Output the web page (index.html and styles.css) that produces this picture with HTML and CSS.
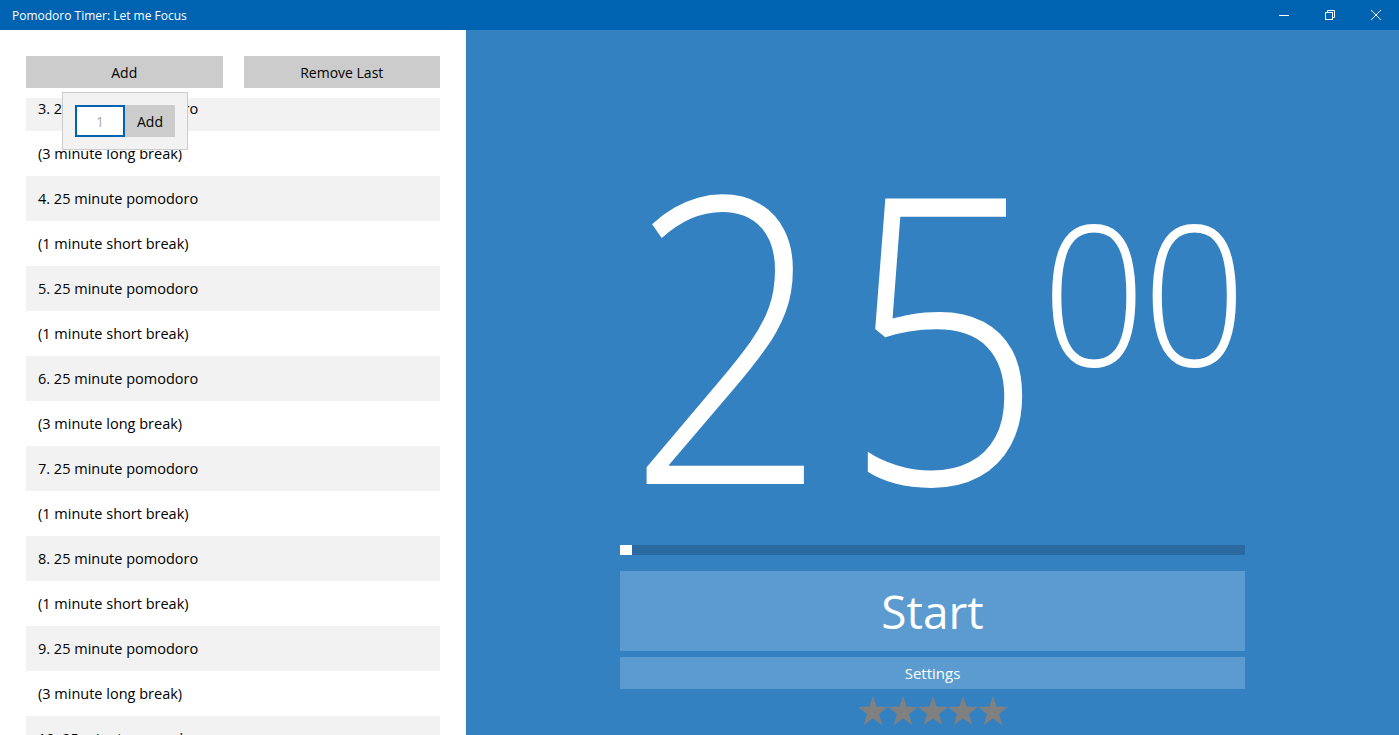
FILE: index.html
```html
<!DOCTYPE html>
<html lang="en">
<head>
    <meta charset="UTF-8">
    <meta name="viewport" content="width=device-width, initial-scale=1.0">
    <title>Pomodoro Timer: Let me Focus</title>
    <link rel="stylesheet" href="styles.css">
</head>
<body>
    <div class="titlebar">
        <span class="title">Pomodoro Timer: Let me Focus</span>
        <div class="window-btns">
            <span class="win-btn">
                <svg width="10" height="10" viewBox="0 0 10 10"><path d="M0 5.5h10" stroke="#fff" stroke-width="1"/></svg>
            </span>
            <span class="win-btn">
                <svg width="10" height="10" viewBox="0 0 10 10" fill="none" stroke="#fff" stroke-width="1"><rect x="0.5" y="2.5" width="7" height="7"/><path d="M2.5 2.5V0.5h7v7h-2"/></svg>
            </span>
            <span class="win-btn">
                <svg width="10" height="10" viewBox="0 0 10 10"><path d="M0 0L10 10M10 0L0 10" stroke="#fff" stroke-width="1"/></svg>
            </span>
        </div>
    </div>
    <div class="main">
        <div class="left">
            <div class="toolbar">
                <button class="btn">Add</button>
                <button class="btn">Remove Last</button>
            </div>
            <div class="list-view">
                <div class="list" id="list"></div>
            </div>
            <div class="flyout">
                <input type="text" class="count-input" placeholder="1">
                <button class="btn flyout-btn">Add</button>
            </div>
        </div>
        <div class="right">
            <div class="timer">
                <span class="minutes">25</span><span class="seconds">00</span>
            </div>
            <div class="progress"><div class="progress-fill"></div></div>
            <button class="btn-start">Start</button>
            <button class="btn-settings">Settings</button>
            <div class="stars" id="stars"></div>
        </div>
    </div>

    <script>
        var items = [];
        for(var i = 3; i <= 10; i++){
            items.push(i + ". 25 minute pomodoro");
            items.push(i % 3 == 0 ? "(3 minute long break)" : "(1 minute short break)");
        }

        var list = document.querySelector("#list");
        for(var j = 0; j < items.length; j++){
            var div = document.createElement("div");
            div.className = j % 2 == 0 ? "item item-alt" : "item";
            div.textContent = items[j];
            list.appendChild(div);
        }

        var stars = document.querySelector("#stars");
        var star = '<svg width="30" height="30" viewBox="0 0 30 30"><polygon points="15,0 18.6,10.6 30,10.9 21,17.9 24.4,29 15,22.4 5.6,29 9,17.9 0,10.9 11.4,10.6" fill="#808080"/></svg>';
        for(var k = 0; k < 5; k++){
            stars.innerHTML += star;
        }
    </script>
</body>
</html>
```

FILE: styles.css
```css
body {
    margin: 0;
    font-family: "Open Sans", "Noto Sans", sans-serif;
    height: 735px;
    overflow: hidden;
    display: flex;
    flex-direction: column;
}

.titlebar {
    height: 30px;
    background-color: #0063b1;
    color: white;
    display: flex;
    align-items: center;
    justify-content: space-between;
    flex-shrink: 0;
}

.title {
    font-size: 12px;
    padding-left: 12px;
}

.window-btns {
    display: flex;
    height: 30px;
}

.win-btn {
    width: 46px;
    display: flex;
    align-items: center;
    justify-content: center;
}

.main {
    flex: 1;
    display: flex;
    min-height: 0;
}

.left {
    width: 466px;
    background-color: white;
    position: relative;
    padding: 26px 26px 0 26px;
    box-sizing: border-box;
    display: flex;
    flex-direction: column;
}

.toolbar {
    display: flex;
    gap: 21px;
}

.btn {
    flex: 1;
    height: 32px;
    border: none;
    background-color: #cccccc;
    font-family: inherit;
    font-size: 14px;
    color: #000;
    padding: 0;
}

.list-view {
    margin-top: 10px;
    flex: 1;
    overflow: hidden;
}

.list {
    margin-top: -12px;
}

.item {
    height: 45px;
    line-height: 45px;
    padding-left: 12px;
    font-size: 14.5px;
    color: #000;
}

.item-alt {
    background-color: #f2f2f2;
}

.flyout {
    position: absolute;
    left: 62px;
    top: 62px;
    width: 126px;
    height: 58px;
    box-sizing: border-box;
    background-color: #f2f2f2;
    border: 1px solid #cccccc;
    display: flex;
    align-items: center;
    padding-left: 12px;
}

.count-input {
    width: 50px;
    height: 32px;
    box-sizing: border-box;
    border: 2px solid #0063b1;
    text-align: center;
    font-family: inherit;
    font-size: 14px;
    outline: none;
}

.count-input::placeholder {
    color: #aaa;
}

.flyout-btn {
    flex: none;
    width: 50px;
}

.right {
    flex: 1;
    background-color: #3481c2;
    display: flex;
    flex-direction: column;
    align-items: center;
    color: white;
}

.timer {
    height: 500px;
    display: flex;
    align-items: flex-start;
    font-weight: 300;
    line-height: 1;
    transform: scaleX(0.88);
    margin-left: -6px;
}

.minutes {
    font-size: 400px;
    margin-top: 99px;
    letter-spacing: 17px;
}

.seconds {
    font-size: 196px;
    margin-top: 162px;
    margin-left: -20px;
    letter-spacing: -4px;
    transform: scaleX(1.06);
    transform-origin: left top;
}

.progress {
    width: 625px;
    height: 10px;
    background-color: #2a6aa0;
    margin-top: 15px;
}

.progress-fill {
    width: 12px;
    height: 10px;
    background-color: white;
}

.btn-start {
    width: 625px;
    height: 80px;
    margin-top: 16px;
    border: none;
    background-color: #5b9bcf;
    color: white;
    font-family: inherit;
    font-size: 46px;
}

.btn-settings {
    width: 625px;
    height: 32px;
    margin-top: 6px;
    border: none;
    background-color: #5b9bcf;
    color: white;
    font-family: inherit;
    font-size: 15px;
}

.stars {
    display: flex;
    margin-top: 7px;
}

.stars svg {
    display: block;
}
```
